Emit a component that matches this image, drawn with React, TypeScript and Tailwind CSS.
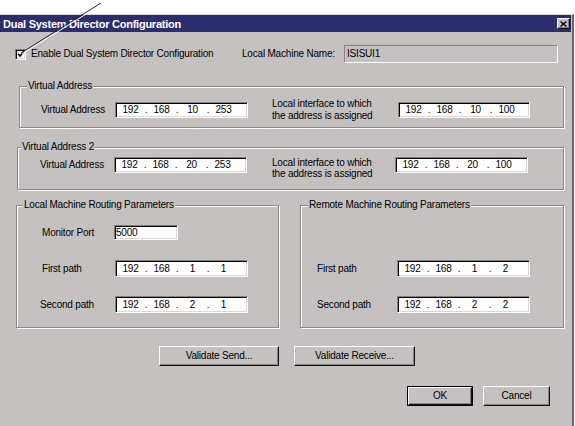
import { Fragment } from "react";

// Sunken (input) and raised (button) 3D borders, Windows classic look
const sunken =
  "border border-t-[#858181] border-l-[#858181] border-b-white border-r-white shadow-[inset_1px_1px_0_#000,inset_-1px_-1px_0_#dcd8d8]";
const raised =
  "border border-t-white border-l-white border-b-[#111] border-r-[#111] shadow-[inset_-1px_-1px_0_#858181]";
const etched =
  "border border-[#8a8686] shadow-[inset_1px_1px_0_#fff,1px_1px_0_#fff]";

type IpProps = {
  octets: string[];
  size: string;
};

function IpBox({ octets, size }: IpProps) {
  return (
    <div className={`${size} flex shrink-0 items-center bg-white pl-[1px] ${sunken}`}>
      {octets.map((o, i) => (
        <Fragment key={i}>
          {i > 0 && <span className="w-[4px] text-center">.</span>}
          <span className="w-[27px] text-center">{o}</span>
        </Fragment>
      ))}
    </div>
  );
}

function Button({ label, width, isDefault = false }: { label: string; width: string; isDefault?: boolean }) {
  if (isDefault) {
    return (
      <div className={`${width} h-[20px] border border-black`}>
        <div className={`flex h-full w-full items-center justify-center ${raised}`}>{label}</div>
      </div>
    );
  }
  return <div className={`${width} flex h-[20px] items-center justify-center ${raised}`}>{label}</div>;
}

export default function App() {
  return (
    <div className="relative h-[426px] w-[575px] overflow-hidden bg-white font-['Liberation_Sans',Arial,sans-serif] text-[10px] leading-[12px] tracking-[-0.2px] text-black">
      <div className="h-[14px]" />

      {/* janela do diálogo */}
      <div className="flex h-[412px] w-[574px] flex-col border-t border-r-2 border-t-[#dcd8d8] border-r-[#6c6868] bg-[#c5c1c1]">
        {/* barra de título */}
        <div className="mr-[1px] flex h-[17px] items-center justify-between bg-[#2b2d6e] pl-[3px] pr-[1px]">
          <span className="text-[11px] font-bold tracking-[-0.25px] text-white">Dual System Director Configuration</span>
          <div className={`flex h-[11px] w-[13px] items-center justify-center bg-[#c5c1c1] ${raised}`}>
            <svg width="7" height="6" viewBox="0 0 7 6">
              <path d="M0.5 0.5 L6.5 5.5 M6.5 0.5 L0.5 5.5" stroke="#000" strokeWidth="1.4" />
            </svg>
          </div>
        </div>

        {/* linha 1: checkbox e nome da máquina */}
        <div className="mt-[13px] flex h-[18px] items-center">
          <div className={`ml-[15px] flex h-[11px] w-[11px] items-center justify-center bg-white ${sunken}`}>
            <svg width="8" height="8" viewBox="0 0 8 8">
              <path d="M1 3.8 L3 6 L7 1.5" stroke="#000" strokeWidth="1.6" fill="none" />
            </svg>
          </div>
          <span className="ml-[5px] w-[211px]">Enable Dual System Director Configuration</span>
          <span className="w-[102px]">Local Machine Name:</span>
          <div className="flex h-[18px] w-[214px] items-center border border-t-[#858181] border-l-[#858181] border-b-white border-r-white pl-[2px]">
            ISISUI1
          </div>
        </div>

        {/* Virtual Address */}
        <fieldset className={`ml-[19px] mt-[17px] w-[545px] ${etched}`}>
          <legend className="ml-[7px] bg-[#c5c1c1] px-[1px] leading-[12px]">Virtual Address</legend>
          <div className="flex h-[35px] items-center pb-[9px] pl-[21px] pt-[10px]">
            <span className="w-[74px]">Virtual Address</span>
            <IpBox octets={["192", "168", "10", "253"]} size="w-[133px] h-[16px]" />
            <span className="ml-[24px] w-[126px]">
              Local interface to which
              <br />
              the address is assigned
            </span>
            <IpBox octets={["192", "168", "10", "100"]} size="w-[132px] h-[16px]" />
          </div>
        </fieldset>

        {/* Virtual Address 2 */}
        <fieldset className={`ml-[17px] mt-[13px] w-[547px] ${etched}`}>
          <legend className="ml-[3px] bg-[#c5c1c1] px-[1px] leading-[12px]">Virtual Address 2</legend>
          <div className="flex items-start pb-[10px] pl-[22px] pt-[4px]">
            <span className="mt-[2px] w-[74px]">Virtual Address</span>
            <IpBox octets={["192", "168", "20", "253"]} size="w-[133px] h-[16px]" />
            <span className="ml-[25px] w-[123px] leading-[11px]">
              Local interface to which
              <br />
              the address is assigned
            </span>
            <IpBox octets={["192", "168", "20", "100"]} size="w-[133px] h-[16px]" />
          </div>
        </fieldset>

        {/* parâmetros de roteamento */}
        <div className="mt-[9px] flex">
          <fieldset className={`ml-[16px] h-[129px] w-[263px] ${etched}`}>
            <legend className="ml-[6px] bg-[#c5c1c1] px-[1px] leading-[12px]">Local Machine Routing Parameters</legend>
            <div className="flex flex-col pl-[25px] pt-[14px]">
              <div className="flex h-[15px] items-center">
                <span className="w-[72px]">Monitor Port</span>
                <div className={`flex h-[15px] w-[64px] items-center bg-white pl-[1px] ${sunken}`}>5000</div>
              </div>
              <div className="mt-[20px] flex items-center">
                <span className="w-[73px]">First path</span>
                <IpBox octets={["192", "168", "1", "1"]} size="w-[133px] h-[17px]" />
              </div>
              <div className="mt-[19px] flex items-center">
                <span className="-ml-[2px] w-[75px]">Second path</span>
                <IpBox octets={["192", "168", "2", "1"]} size="w-[133px] h-[17px]" />
              </div>
            </div>
          </fieldset>

          <fieldset className={`ml-[21px] h-[129px] w-[264px] ${etched}`}>
            <legend className="ml-[7px] bg-[#c5c1c1] px-[1px] leading-[12px]">Remote Machine Routing Parameters</legend>
            <div className="flex flex-col pl-[16px] pt-[49px]">
              <div className="flex items-center">
                <span className="w-[80px]">First path</span>
                <IpBox octets={["192", "168", "1", "2"]} size="w-[133px] h-[17px]" />
              </div>
              <div className="mt-[19px] flex items-center">
                <span className="w-[80px]">Second path</span>
                <IpBox octets={["192", "168", "2", "2"]} size="w-[133px] h-[17px]" />
              </div>
            </div>
          </fieldset>
        </div>

        {/* botões de validação */}
        <div className="mt-[18px] flex gap-[15px] pl-[159px]">
          <Button label="Validate Send..." width="w-[120px]" />
          <Button label="Validate Receive..." width="w-[121px]" />
        </div>

        {/* OK / Cancel */}
        <div className="mt-[20px] flex gap-[10px] pl-[407px]">
          <Button label="OK" width="w-[66px]" isDefault />
          <Button label="Cancel" width="w-[67px]" />
        </div>
      </div>

      {/* linha de chamada apontando para o checkbox */}
      <svg className="pointer-events-none absolute left-0 top-0" width="575" height="426">
        <line x1="102.5" y1="3.8" x2="22" y2="54" stroke="#fff" strokeWidth="1" />
        <line x1="101" y1="3" x2="21" y2="53" stroke="#2a2a2a" strokeWidth="1" />
      </svg>
    </div>
  );
}
